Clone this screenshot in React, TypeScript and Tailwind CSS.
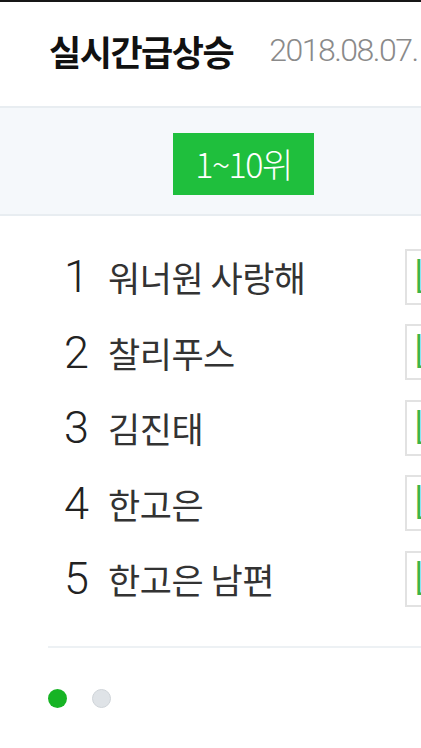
const ranks = [
  { rank: 1, name: "워너원 사랑해" },
  { rank: 2, name: "찰리푸스" },
  { rank: 3, name: "김진태" },
  { rank: 4, name: "한고은" },
  { rank: 5, name: "한고은 남편" },
];

const kr = "font-['Noto_Sans_CJK_KR','Noto_Sans',sans-serif]";

export default function App() {
  return (
    <div className={`w-[421px] h-[748px] overflow-hidden bg-white ${kr}`}>
      <div className="h-[2px] bg-[#161616]" />

      {/* Header */}
      <div className="h-[104px] flex items-center pl-[49px] pb-[8px] whitespace-nowrap">
        <h1 className="text-[35px] font-bold tracking-[-1.5px] text-[#111] leading-none">
          실시간급상승
        </h1>
        <span className="ml-[36px] font-['Roboto','Liberation_Sans',sans-serif] font-light text-[32px] tracking-[-1.5px] text-[#8a8a8a] leading-none">
          2018.08.07.
        </span>
      </div>

      {/* Range tab */}
      <div className="h-[110px] bg-[#f5f8fb] border-y-2 border-[#e8edf1] flex items-center pt-[6px]">
        <div className="ml-[173px] w-[141px] h-[62px] bg-[#1fbf3d] flex items-center justify-center text-white text-[34px] font-light tracking-[-1.5px] leading-none">
          1~10위
        </div>
      </div>

      {/* List */}
      <ul className="w-[480px] pt-[23px]">
        {ranks.map((r) => (
          <li key={r.rank} className="h-[75.5px] flex items-center pl-[64px]">
            <span className="w-[44px] font-['Roboto','Liberation_Sans',sans-serif] font-light text-[45px] text-[#222] leading-none">
              {r.rank}
            </span>
            <span className="w-[297px] text-[35px] text-[#333] tracking-[-0.5px] leading-none">
              {r.name}
            </span>
            <span className="w-[60px] h-[56px] border-2 border-[#e2e2e2] pl-[6px] flex items-center font-['Roboto','Liberation_Sans',sans-serif] font-light text-[48px] text-[#3bb54a] leading-none">
              L
            </span>
          </li>
        ))}
      </ul>

      <div className="ml-[48px] mt-[29px] h-[2px] bg-[#edf1f4]" />

      {/* Pager */}
      <div className="flex gap-[25px] pl-[48px] pt-[41px]">
        <span className="w-[19px] h-[19px] rounded-full bg-[#17b425]" />
        <span className="w-[19px] h-[19px] rounded-full bg-[#dfe3e7] border border-[#cfd4d9]" />
      </div>
    </div>
  );
}
